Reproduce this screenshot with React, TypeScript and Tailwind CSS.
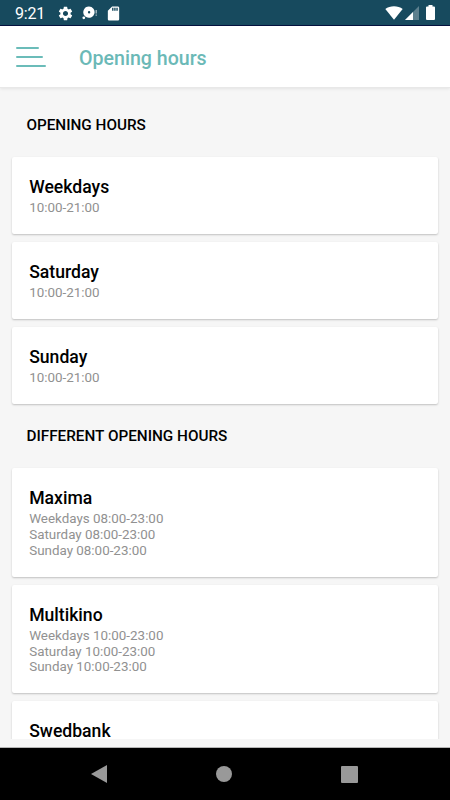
import { MdSettings, MdSdCard } from 'react-icons/md'

const openingHours = [
  { name: 'Weekdays', hours: ['10:00-21:00'] },
  { name: 'Saturday', hours: ['10:00-21:00'] },
  { name: 'Sunday', hours: ['10:00-21:00'] },
]

const differentHours = [
  { name: 'Maxima', hours: ['Weekdays 08:00-23:00', 'Saturday 08:00-23:00', 'Sunday 08:00-23:00'] },
  { name: 'Multikino', hours: ['Weekdays 10:00-23:00', 'Saturday 10:00-23:00', 'Sunday 10:00-23:00'] },
  { name: 'Swedbank', hours: [] },
]

function StatusBar() {
  return (
    <div className="flex h-[26px] shrink-0 items-center border-b border-[#05123f] bg-[#174a5e] pl-[15px] pr-[15px] text-white">
      <span className="w-[42px] pt-[3px] text-[16px] leading-none tracking-[-0.2px]">9:21</span>
      <MdSettings className="mt-[1px] h-[17px] w-[17px]" />
      <svg className="ml-[8px] mt-[1px] h-[14px] w-4" viewBox="0 0 16 14" fill="currentColor">
        <path fillRule="evenodd" d="M7 .6a5.6 5.6 0 1 1-2.900 10.400L3 10.200A5.600 5.600 0 0 1 7 .6Zm.1 4.500a1.200 1.200 0 1 0 0 2.400 1.200 1.200 0 0 0 0-2.400Z" />
        <circle cx="1.8" cy="11.8" r="1.4" />
        <path d="M13.600 4h1.200v3.600h-1.200zM13.600 8.500h1.200v1.200h-1.200z" opacity=".7" />
      </svg>
      <MdSdCard className="ml-[7px] mt-[1px] h-[17px] w-[17px]" />
      <svg className="ml-auto h-[14px] w-[18px]" viewBox="0 0 18 14" fill="currentColor">
        <path d="M.3 3.100C5-.6 13-.6 17.700 3.100L9 13.800Z" />
      </svg>
      <svg className="ml-[2px] mt-[1px] h-[14px] w-[14px]" viewBox="0 0 14 14" fill="currentColor">
        <path d="M14 0v14H0Z" opacity=".3" />
        <path d="M8 6v8H0Z" />
      </svg>
      <svg className="ml-[7px] h-[15px] w-[9px]" viewBox="0 0 9 15" fill="currentColor">
        <path d="M2.500 0h4v1.400H8q1 0 1 1V14q0 1-1 1H1q-1 0-1-1V2.400q0-1 1-1h1.500Z" />
      </svg>
    </div>
  )
}

function Header() {
  return (
    <header className="z-10 flex h-[62px] shrink-0 items-center border-b border-[#e8e8e8] bg-white shadow-[0_1px_3px_rgba(0,0,0,0.08)]">
      <button className="ml-4 flex w-[63px] flex-col gap-[7px] pt-[1px]" aria-label="Menu">
        <span className="h-[2px] w-[23px] rounded-full bg-[#6bbcb9]" />
        <span className="h-[2px] w-[27px] rounded-full bg-[#6bbcb9]" />
        <span className="h-[2px] w-[30px] rounded-full bg-[#6bbcb9]" />
      </button>
      <h1 className="pt-[4px] text-[19.6px] font-[470] leading-6 text-[#6bb9b7]">Opening hours</h1>
    </header>
  )
}

function HoursCard({ name, hours }: { name: string; hours: string[] }) {
  return (
    <div className="rounded-[2px] bg-white pb-[18.2px] pl-[17.2px] pr-[18px] pt-[19px] shadow-[0_1px_2px_rgba(0,0,0,0.22)]">
      <h3 className="text-[17.6px] font-[470] leading-[22px] text-black">{name}</h3>
      <div className="pt-[2px]">
        {hours.map((line) => (
          <p key={line} className="text-[13.4px] leading-[15.8px] text-[#919191]">{line}</p>
        ))}
      </div>
    </div>
  )
}

function NavBar() {
  return (
    <div className="flex h-[53px] shrink-0 items-center justify-between border-t border-[#b5b5b5] bg-black pl-[91px] pr-[92px] text-[#999]">
      <svg className="h-[18px] w-4" viewBox="0 0 16 18" fill="currentColor">
        <path d="M16 0v18L0 9Z" />
      </svg>
      <span className="h-4 w-4 rounded-full bg-[#999]" />
      <span className="h-[17px] w-[17px] rounded-[1px] bg-[#999]" />
    </div>
  )
}

export default function App() {
  return (
    <div className="flex h-[800px] w-[450px] flex-col overflow-hidden bg-[#f6f6f6] font-['Roboto',sans-serif]">
      <StatusBar />
      <Header />
      <main className="mb-2 min-h-0 flex-1 overflow-hidden px-[12px]">
        <h2 className="pl-[14.4px] pt-[27px] text-[15.3px] font-[470] leading-5 text-black">OPENING HOURS</h2>
        <div className="mt-[21.7px] flex flex-col gap-2">
          {openingHours.map((item) => (
            <HoursCard key={item.name} {...item} />
          ))}
        </div>
        <h2 className="mt-[22.6px] pl-[14.4px] text-[15.3px] font-[470] leading-5 text-black">DIFFERENT OPENING HOURS</h2>
        <div className="mt-[22px] flex flex-col gap-2">
          {differentHours.map((item) => (
            <HoursCard key={item.name} {...item} />
          ))}
        </div>
      </main>
      <NavBar />
    </div>
  )
}
